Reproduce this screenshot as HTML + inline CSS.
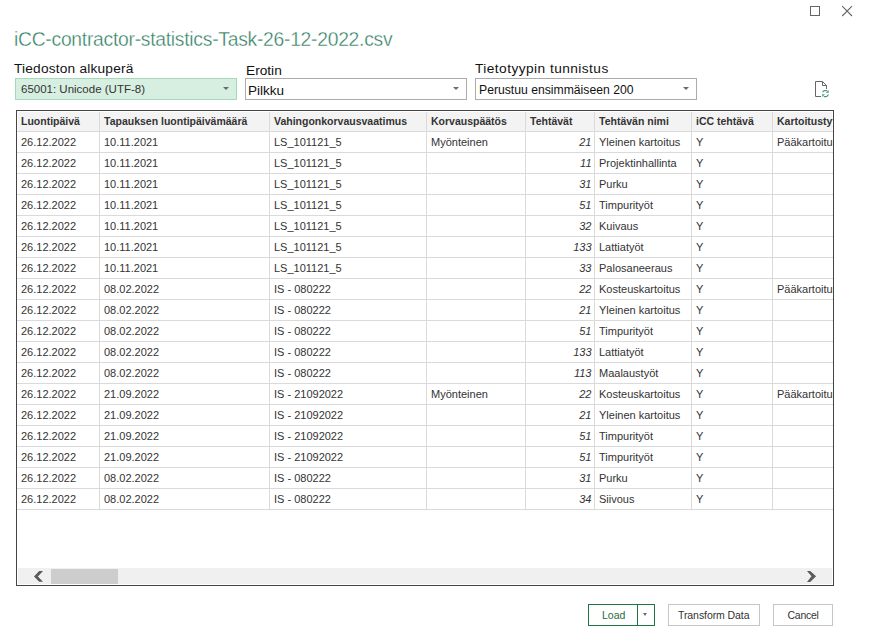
<!DOCTYPE html>
<html><head><meta charset="utf-8">
<style>
*{box-sizing:border-box;margin:0;padding:0}
html,body{width:890px;height:633px;overflow:hidden;background:#fff;font-family:"Liberation Sans",sans-serif;color:#333}
.a{position:absolute;white-space:nowrap;line-height:1}
#title{left:14px;top:29.5px;font-size:19.3px;letter-spacing:-0.26px;color:#2f7d5f;-webkit-text-stroke:0.35px #fff}
.lbl{font-size:13.7px;color:#111}
.dd{position:absolute;width:222px;height:22px;border:1px solid #ababab;background:#fff}
.dd.g{background:#d6efe1;border-color:#a6d8bb}
.tri{position:absolute;width:0;height:0;border-left:3px solid transparent;border-right:3px solid transparent;border-top:3px solid #6a6a6a}
#tbl{position:absolute;left:16px;top:110px;width:818px;height:476px;border:1px solid #444;background:#fff;overflow:hidden}
.hdr{position:absolute;left:1px;top:1px;width:814px;height:19px;background:#f3f3f3}
.hl{position:absolute;height:1px;background:#dadada}
.vl{position:absolute;width:1px;background:#dadada}
.t{position:absolute;white-space:nowrap;line-height:1;font-size:11px;color:#333}
.h{font-weight:bold;font-size:10.5px;color:#333}
.n{font-style:italic;text-align:right}
.btn{position:absolute;height:22px;border:1px solid #c6c6c6;background:#fff}
</style></head><body>
<!-- window controls -->
<div class="a" style="left:810px;top:6px;width:10px;height:10px;border:1px solid #666"></div>
<svg class="a" style="left:840px;top:4px" width="14" height="14" viewBox="0 0 14 14"><path d="M2.2 2.2L12 12M12 2.2L2.2 12" stroke="#666" stroke-width="1.1" fill="none"/></svg>

<div id="title" class="a">iCC-contractor-statistics-Task-26-12-2022.csv</div>

<div class="a lbl" style="left:14px;top:61.5px;letter-spacing:0.2px">Tiedoston alkuperä</div>
<div class="a lbl" style="left:246px;top:63.5px">Erotin</div>
<div class="a lbl" style="left:475px;top:61.5px;letter-spacing:0.45px">Tietotyypin tunnistus</div>

<div class="dd g" style="left:15px;top:78px"></div>
<div class="a" style="left:21px;top:84px;font-size:11.5px;color:#333">65001: Unicode (UTF-8)</div>
<div class="tri" style="left:223px;top:87px"></div>

<div class="dd" style="left:245px;top:78px"></div>
<div class="a" style="left:248px;top:84px;font-size:13.5px;color:#111">Pilkku</div>
<div class="tri" style="left:453px;top:87px"></div>

<div class="dd" style="left:475px;top:78px"></div>
<div class="a" style="left:479px;top:84px;font-size:12.2px;color:#111">Perustuu ensimmäiseen 200</div>
<div class="tri" style="left:683px;top:87px"></div>

<!-- refresh icon -->
<svg class="a" style="left:812px;top:78px" width="22" height="22" viewBox="0 0 22 22">
<path d="M3.5 3.5H10.5L14.5 7.5V11" stroke="#666" stroke-width="1" fill="none"/>
<path d="M10.5 3.5V7.5H14.5" stroke="#666" stroke-width="1" fill="none"/>
<path d="M3.5 3.5V18.5H9" stroke="#666" stroke-width="1" fill="none"/>
<path d="M10.6 14.3C11.1 13.2 11.8 12.6 12.8 12.6H15.2" stroke="#479a78" stroke-width="1.15" fill="none"/>
<path d="M16.7 12V14.7H13.9Z" fill="#479a78"/>
<path d="M16.4 16.5C15.9 17.8 15.2 18.6 14.2 18.6H11.8" stroke="#479a78" stroke-width="1.15" fill="none"/>
<path d="M10.2 16.2H12.9L10.2 18.9Z" fill="#479a78"/>
</svg>

<div id="tbl">
<div class="hdr"></div>
<div class="hl" style="left:0;top:20px;width:816px"></div>
<div class="hl" style="left:0;top:41px;width:816px"></div>
<div class="hl" style="left:0;top:62px;width:816px"></div>
<div class="hl" style="left:0;top:83px;width:816px"></div>
<div class="hl" style="left:0;top:104px;width:816px"></div>
<div class="hl" style="left:0;top:125px;width:816px"></div>
<div class="hl" style="left:0;top:146px;width:816px"></div>
<div class="hl" style="left:0;top:167px;width:816px"></div>
<div class="hl" style="left:0;top:188px;width:816px"></div>
<div class="hl" style="left:0;top:209px;width:816px"></div>
<div class="hl" style="left:0;top:230px;width:816px"></div>
<div class="hl" style="left:0;top:251px;width:816px"></div>
<div class="hl" style="left:0;top:272px;width:816px"></div>
<div class="hl" style="left:0;top:293px;width:816px"></div>
<div class="hl" style="left:0;top:314px;width:816px"></div>
<div class="hl" style="left:0;top:335px;width:816px"></div>
<div class="hl" style="left:0;top:356px;width:816px"></div>
<div class="hl" style="left:0;top:377px;width:816px"></div>
<div class="hl" style="left:0;top:398px;width:816px"></div>
<div class="vl" style="left:82px;top:1px;height:397px"></div>
<div class="vl" style="left:252px;top:1px;height:397px"></div>
<div class="vl" style="left:409px;top:1px;height:397px"></div>
<div class="vl" style="left:508px;top:1px;height:397px"></div>
<div class="vl" style="left:577px;top:1px;height:397px"></div>
<div class="vl" style="left:674px;top:1px;height:397px"></div>
<div class="vl" style="left:755px;top:1px;height:397px"></div>
<div class="t h" style="left:4px;top:4.60px">Luontipäivä</div>
<div class="t h" style="left:87px;top:4.60px">Tapauksen luontipäivämäärä</div>
<div class="t h" style="left:257px;top:4.60px">Vahingonkorvausvaatimus</div>
<div class="t h" style="left:414px;top:4.60px">Korvauspäätös</div>
<div class="t h" style="left:513px;top:4.60px">Tehtävät</div>
<div class="t h" style="left:582px;top:4.60px">Tehtävän nimi</div>
<div class="t h" style="left:679px;top:4.60px">iCC tehtävä</div>
<div class="t h" style="left:760px;top:4.60px">Kartoitustyyppi</div>
<div class="t" style="left:4px;top:25.70px">26.12.2022</div>
<div class="t" style="left:87px;top:25.70px">10.11.2021</div>
<div class="t" style="left:257px;top:25.70px">LS_101121_5</div>
<div class="t" style="left:414px;top:25.70px">Myönteinen</div>
<div class="t n" style="right:241.50px;top:25.70px">21</div>
<div class="t" style="left:582px;top:25.70px">Yleinen kartoitus</div>
<div class="t" style="left:679px;top:25.70px">Y</div>
<div class="t" style="left:760px;top:25.70px">Pääkartoitus</div>
<div class="t" style="left:4px;top:46.70px">26.12.2022</div>
<div class="t" style="left:87px;top:46.70px">10.11.2021</div>
<div class="t" style="left:257px;top:46.70px">LS_101121_5</div>
<div class="t n" style="right:241.50px;top:46.70px">11</div>
<div class="t" style="left:582px;top:46.70px">Projektinhallinta</div>
<div class="t" style="left:679px;top:46.70px">Y</div>
<div class="t" style="left:4px;top:67.70px">26.12.2022</div>
<div class="t" style="left:87px;top:67.70px">10.11.2021</div>
<div class="t" style="left:257px;top:67.70px">LS_101121_5</div>
<div class="t n" style="right:241.50px;top:67.70px">31</div>
<div class="t" style="left:582px;top:67.70px">Purku</div>
<div class="t" style="left:679px;top:67.70px">Y</div>
<div class="t" style="left:4px;top:88.70px">26.12.2022</div>
<div class="t" style="left:87px;top:88.70px">10.11.2021</div>
<div class="t" style="left:257px;top:88.70px">LS_101121_5</div>
<div class="t n" style="right:241.50px;top:88.70px">51</div>
<div class="t" style="left:582px;top:88.70px">Timpurityöt</div>
<div class="t" style="left:679px;top:88.70px">Y</div>
<div class="t" style="left:4px;top:109.70px">26.12.2022</div>
<div class="t" style="left:87px;top:109.70px">10.11.2021</div>
<div class="t" style="left:257px;top:109.70px">LS_101121_5</div>
<div class="t n" style="right:241.50px;top:109.70px">32</div>
<div class="t" style="left:582px;top:109.70px">Kuivaus</div>
<div class="t" style="left:679px;top:109.70px">Y</div>
<div class="t" style="left:4px;top:130.70px">26.12.2022</div>
<div class="t" style="left:87px;top:130.70px">10.11.2021</div>
<div class="t" style="left:257px;top:130.70px">LS_101121_5</div>
<div class="t n" style="right:241.50px;top:130.70px">133</div>
<div class="t" style="left:582px;top:130.70px">Lattiatyöt</div>
<div class="t" style="left:679px;top:130.70px">Y</div>
<div class="t" style="left:4px;top:151.70px">26.12.2022</div>
<div class="t" style="left:87px;top:151.70px">10.11.2021</div>
<div class="t" style="left:257px;top:151.70px">LS_101121_5</div>
<div class="t n" style="right:241.50px;top:151.70px">33</div>
<div class="t" style="left:582px;top:151.70px">Palosaneeraus</div>
<div class="t" style="left:679px;top:151.70px">Y</div>
<div class="t" style="left:4px;top:172.70px">26.12.2022</div>
<div class="t" style="left:87px;top:172.70px">08.02.2022</div>
<div class="t" style="left:257px;top:172.70px">IS - 080222</div>
<div class="t n" style="right:241.50px;top:172.70px">22</div>
<div class="t" style="left:582px;top:172.70px">Kosteuskartoitus</div>
<div class="t" style="left:679px;top:172.70px">Y</div>
<div class="t" style="left:760px;top:172.70px">Pääkartoitus</div>
<div class="t" style="left:4px;top:193.70px">26.12.2022</div>
<div class="t" style="left:87px;top:193.70px">08.02.2022</div>
<div class="t" style="left:257px;top:193.70px">IS - 080222</div>
<div class="t n" style="right:241.50px;top:193.70px">21</div>
<div class="t" style="left:582px;top:193.70px">Yleinen kartoitus</div>
<div class="t" style="left:679px;top:193.70px">Y</div>
<div class="t" style="left:4px;top:214.70px">26.12.2022</div>
<div class="t" style="left:87px;top:214.70px">08.02.2022</div>
<div class="t" style="left:257px;top:214.70px">IS - 080222</div>
<div class="t n" style="right:241.50px;top:214.70px">51</div>
<div class="t" style="left:582px;top:214.70px">Timpurityöt</div>
<div class="t" style="left:679px;top:214.70px">Y</div>
<div class="t" style="left:4px;top:235.70px">26.12.2022</div>
<div class="t" style="left:87px;top:235.70px">08.02.2022</div>
<div class="t" style="left:257px;top:235.70px">IS - 080222</div>
<div class="t n" style="right:241.50px;top:235.70px">133</div>
<div class="t" style="left:582px;top:235.70px">Lattiatyöt</div>
<div class="t" style="left:679px;top:235.70px">Y</div>
<div class="t" style="left:4px;top:256.70px">26.12.2022</div>
<div class="t" style="left:87px;top:256.70px">08.02.2022</div>
<div class="t" style="left:257px;top:256.70px">IS - 080222</div>
<div class="t n" style="right:241.50px;top:256.70px">113</div>
<div class="t" style="left:582px;top:256.70px">Maalaustyöt</div>
<div class="t" style="left:679px;top:256.70px">Y</div>
<div class="t" style="left:4px;top:277.70px">26.12.2022</div>
<div class="t" style="left:87px;top:277.70px">21.09.2022</div>
<div class="t" style="left:257px;top:277.70px">IS - 21092022</div>
<div class="t" style="left:414px;top:277.70px">Myönteinen</div>
<div class="t n" style="right:241.50px;top:277.70px">22</div>
<div class="t" style="left:582px;top:277.70px">Kosteuskartoitus</div>
<div class="t" style="left:679px;top:277.70px">Y</div>
<div class="t" style="left:760px;top:277.70px">Pääkartoitus</div>
<div class="t" style="left:4px;top:298.70px">26.12.2022</div>
<div class="t" style="left:87px;top:298.70px">21.09.2022</div>
<div class="t" style="left:257px;top:298.70px">IS - 21092022</div>
<div class="t n" style="right:241.50px;top:298.70px">21</div>
<div class="t" style="left:582px;top:298.70px">Yleinen kartoitus</div>
<div class="t" style="left:679px;top:298.70px">Y</div>
<div class="t" style="left:4px;top:319.70px">26.12.2022</div>
<div class="t" style="left:87px;top:319.70px">21.09.2022</div>
<div class="t" style="left:257px;top:319.70px">IS - 21092022</div>
<div class="t n" style="right:241.50px;top:319.70px">51</div>
<div class="t" style="left:582px;top:319.70px">Timpurityöt</div>
<div class="t" style="left:679px;top:319.70px">Y</div>
<div class="t" style="left:4px;top:340.70px">26.12.2022</div>
<div class="t" style="left:87px;top:340.70px">21.09.2022</div>
<div class="t" style="left:257px;top:340.70px">IS - 21092022</div>
<div class="t n" style="right:241.50px;top:340.70px">51</div>
<div class="t" style="left:582px;top:340.70px">Timpurityöt</div>
<div class="t" style="left:679px;top:340.70px">Y</div>
<div class="t" style="left:4px;top:361.70px">26.12.2022</div>
<div class="t" style="left:87px;top:361.70px">08.02.2022</div>
<div class="t" style="left:257px;top:361.70px">IS - 080222</div>
<div class="t n" style="right:241.50px;top:361.70px">31</div>
<div class="t" style="left:582px;top:361.70px">Purku</div>
<div class="t" style="left:679px;top:361.70px">Y</div>
<div class="t" style="left:4px;top:382.70px">26.12.2022</div>
<div class="t" style="left:87px;top:382.70px">08.02.2022</div>
<div class="t" style="left:257px;top:382.70px">IS - 080222</div>
<div class="t n" style="right:241.50px;top:382.70px">34</div>
<div class="t" style="left:582px;top:382.70px">Siivous</div>
<div class="t" style="left:679px;top:382.70px">Y</div>
<div style="position:absolute;left:1px;top:457px;width:814px;height:16px;background:#f0f0f0"></div>
<div style="position:absolute;left:34px;top:458px;width:67px;height:15px;background:#cdcdcd"></div>
<svg style="position:absolute;left:15px;top:458px" width="14" height="15" viewBox="0 0 14 15"><path d="M7.2 2H11L5.9 7.4L11 12.8H7.2L2 7.4Z" fill="#5a5a5a"/></svg>
<svg style="position:absolute;left:788px;top:458px" width="14" height="15" viewBox="0 0 14 15"><path d="M2 2H5.2L11.1 7.3L5.2 12.9H2L6.5 7.3Z" fill="#5a5a5a"/></svg>
</div>

<!-- buttons -->
<div class="btn" style="left:588px;top:604px;width:67px;border-color:#217346"></div>
<div class="a" style="left:637px;top:604px;width:1px;height:22px;background:#217346"></div>
<div class="a" style="left:602px;top:610px;font-size:10.5px;color:#1f6b45">Load</div>
<div class="tri" style="left:643px;top:613px;border-left-width:2.5px;border-right-width:2.5px"></div>
<div class="btn" style="left:668px;top:604px;width:92px"></div>
<div class="a" style="left:678px;top:610px;font-size:10.5px;letter-spacing:-0.08px;color:#333">Transform Data</div>
<div class="btn" style="left:773px;top:604px;width:60px"></div>
<div class="a" style="left:787.5px;top:610px;font-size:10.5px;letter-spacing:-0.25px;color:#333">Cancel</div>
</body></html>
